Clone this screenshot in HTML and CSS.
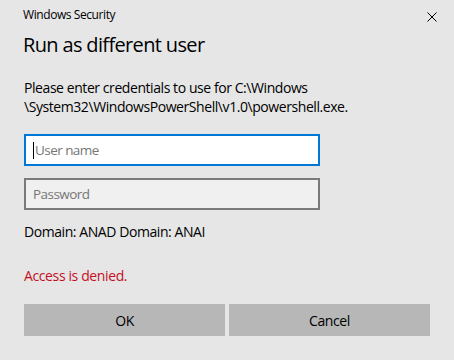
FILE: index.html
```html
<!DOCTYPE html>
<html lang="en">
<head>
<meta charset="utf-8">
<title>Windows Security</title>
<link rel="stylesheet" href="styles.css">
</head>
<body>
<div class="dialog">
  <div class="titlebar">
    <span class="app-name">Windows Security</span>
    <svg class="close" width="10" height="10" viewBox="0 0 10 10" aria-label="Close">
      <path d="M0.5 0.5 L9.5 9.5 M9.5 0.5 L0.5 9.5" stroke="#000" stroke-width="1" fill="none"/>
    </svg>
  </div>
  <h1 class="title">Run as different user</h1>
  <p class="message">Please enter credentials to use for C:\Windows<br>\System32\WindowsPowerShell\v1.0\powershell.exe.</p>
  <div class="field field-focus"><span class="caret"></span><span class="placeholder">User name</span></div>
  <div class="field field-password"><span class="placeholder">Password</span></div>
  <p class="domain">Domain: ANAD Domain: ANAI</p>
  <p class="error">Access is denied.</p>
  <div class="buttons">
    <button class="btn">OK</button>
    <button class="btn">Cancel</button>
  </div>
</div>
</body>
</html>
```

FILE: styles.css
```css
html, body {
  margin: 0;
  padding: 0;
}
body {
  width: 454px;
  height: 360px;
  background: #e6e6e6;
  font-family: "Open Sans", "Noto Sans", sans-serif;
  color: #000;
  overflow: hidden;
}
.dialog {
  display: flex;
  flex-direction: column;
  padding: 0 24px;
}
.titlebar {
  display: flex;
  justify-content: space-between;
  align-items: flex-start;
  height: 31px;
  margin: 0 -7px 0 -1px;
}
.app-name {
  font-size: 12px;
  line-height: 16px;
  padding-top: 7px;
  letter-spacing: -0.42px;
}
.close {
  margin-top: 12px;
}
.title {
  margin: 0 0 0 -1px;
  font-size: 20px;
  line-height: 28px;
  font-weight: 400;
  letter-spacing: -0.65px;
}
.message {
  margin: 19px 0 0 0;
  font-size: 14px;
  line-height: 19px;
  letter-spacing: -0.43px;
}
.field {
  box-sizing: border-box;
  width: 296px;
  height: 32px;
  margin-top: 18px;
  border: 2px solid #0078d7;
  background: #fff;
  display: flex;
  align-items: center;
  padding-left: 7px;
}
.field-password {
  margin-top: 12px;
  border-color: #7a7a7a;
  background: #f0f0f0;
}
.caret {
  width: 1px;
  height: 17px;
  background: #000;
  margin-right: 1px;
}
.placeholder {
  color: #767676;
  font-size: 13.5px;
  line-height: 19px;
  letter-spacing: -0.55px;
}
.domain {
  margin: 12px 0 0 0;
  font-size: 14px;
  line-height: 19px;
  letter-spacing: -0.43px;
}
.error {
  margin: 25px 0 0 0;
  font-size: 14px;
  line-height: 19px;
  color: #c50f1f;
  letter-spacing: -0.38px;
}
.buttons {
  display: flex;
  gap: 4px;
  margin-top: 19px;
}
.btn {
  flex: 1;
  height: 32px;
  border: none;
  background: #b7b7b7;
  font-family: inherit;
  font-size: 14px;
  letter-spacing: -0.4px;
  color: #000;
  padding: 0;
}
```
